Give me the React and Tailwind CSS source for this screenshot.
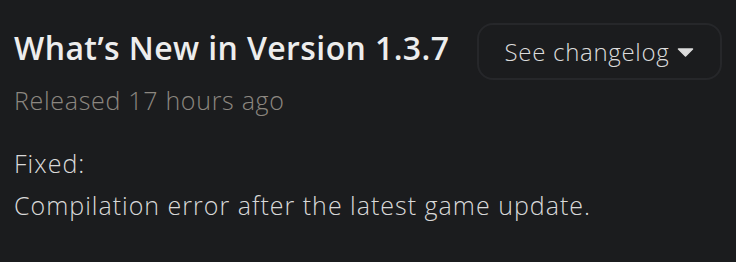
import React from 'react';

const App = () => {
  return (
    <div className="min-h-[262px] w-[736px] bg-[#1b1c1e] px-[14px] pt-[22px] font-['Open_Sans',sans-serif] text-[#d9d9d9]">
      <div className="flex items-start justify-between">
        <div>
          <h1 className="mt-[6px] text-[32px] font-semibold leading-[40px] tracking-[0.4px] text-[#ededed]">What’s New in Version 1.3.7</h1>
          <p className="mt-[17px] text-[25px] font-light leading-[30px] tracking-[0.7px] text-[#8c8780]">Released 17 hours ago</p>
        </div>
        <button className="mt-[1px] flex h-[57px] w-[245px] items-center justify-center gap-[8px] rounded-[16px] border-2 border-[#26272a] bg-[#1b1c1e] text-[24px] font-light tracking-[0.7px] text-[#dcdcdc]">
          See changelog
          <svg width="17" height="9" viewBox="0 0 17 9" className="mt-[2px]">
            <path d="M1.5 1h14L8.5 8z" fill="#dcdcdc" stroke="#dcdcdc" strokeLinejoin="round" strokeWidth="1.5" />
          </svg>
        </button>
      </div>
      <div className="mt-[27px] text-[25px] font-light leading-[42px] tracking-[1px]">
        <p>Fixed:</p>
        <p>Compilation error after the latest game update.</p>
      </div>
    </div>
  );
};

export default App;
